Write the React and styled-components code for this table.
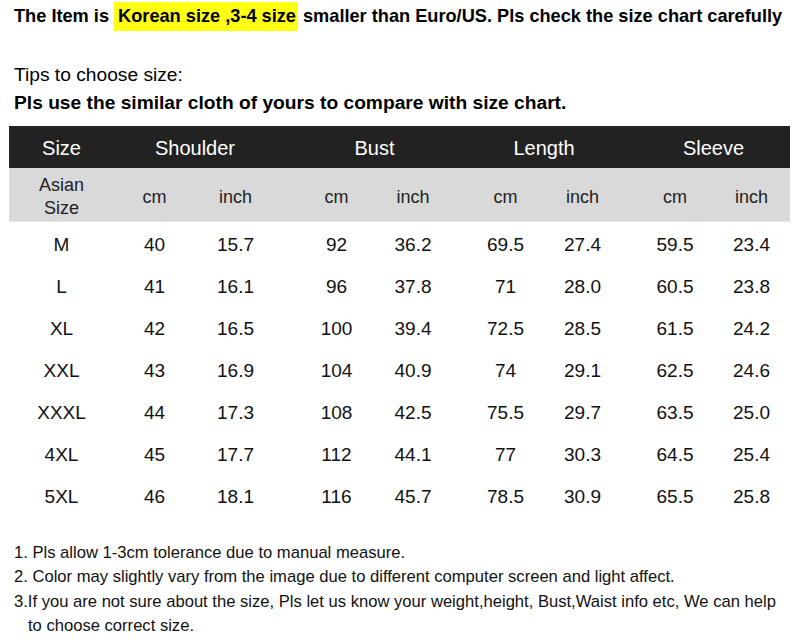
import styled, { createGlobalStyle } from "styled-components";

const GlobalStyle = createGlobalStyle`
  body {
    margin: 0;
    background: #ffffff;
    font-family: "Liberation Sans", Arial, sans-serif;
    color: #000;
  }
`;

const groups = ["Shoulder", "Bust", "Length", "Sleeve"];

// horizontal text offset for each column (px), so the figures sit where the chart has them
const shifts = [3, 3, -5, 6, -4, 4, -4, 4, 0];
const groupShifts = [-2, 2, 0, 4];

const rows = [
  ["M", "40", "15.7", "92", "36.2", "69.5", "27.4", "59.5", "23.4"],
  ["L", "41", "16.1", "96", "37.8", "71", "28.0", "60.5", "23.8"],
  ["XL", "42", "16.5", "100", "39.4", "72.5", "28.5", "61.5", "24.2"],
  ["XXL", "43", "16.9", "104", "40.9", "74", "29.1", "62.5", "24.6"],
  ["XXXL", "44", "17.3", "108", "42.5", "75.5", "29.7", "63.5", "25.0"],
  ["4XL", "45", "17.7", "112", "44.1", "77", "30.3", "64.5", "25.4"],
  ["5XL", "46", "18.1", "116", "45.7", "78.5", "30.9", "65.5", "25.8"],
];

const notes = [
  "1. Pls allow 1-3cm tolerance due to manual measure.",
  "2. Color may slightly vary from the image due to different computer screen and light affect.",
  "3.If you are not sure about the size, Pls let us know your weight,height, Bust,Waist info etc, We can help",
];

const App = () => {
  return (
    <Page>
      <GlobalStyle />
      <Title>
        The Item is <Mark>Korean size ,3-4 size</Mark>smaller than Euro/US. Pls
        check the size chart carefully
      </Title>
      <Tips>Tips to choose size:</Tips>
      <Advice>Pls use the similar cloth of yours to compare with size chart.</Advice>

      <Chart>
        <HeadCell shift={shifts[0]}>Size</HeadCell>
        {groups.map((g, i) => (
          <HeadCell key={g} span={2} shift={groupShifts[i]}>
            {g}
          </HeadCell>
        ))}
        <SubCell shift={shifts[0]}>
          Asian
          <br />
          Size
        </SubCell>
        {groups.map((g, i) => [
          <SubCell key={g + "cm"} shift={shifts[i * 2 + 1]}>
            cm
          </SubCell>,
          <SubCell key={g + "in"} shift={shifts[i * 2 + 2]}>
            inch
          </SubCell>,
        ])}
        {rows.map((r) =>
          r.map((v, i) => (
            <Cell key={r[0] + i} shift={shifts[i]}>
              {v}
            </Cell>
          ))
        )}
      </Chart>

      <Notes>
        {notes.map((n) => (
          <li key={n}>{n}</li>
        ))}
        <li className="indent">to choose correct size.</li>
      </Notes>
    </Page>
  );
};

export default App;

const offset = (p) =>
  p.shift > 0
    ? `padding-left: ${p.shift * 2}px;`
    : p.shift < 0
    ? `padding-right: ${-p.shift * 2}px;`
    : "";

let Page = styled.div`
  width: 800px;
  height: 640px;
  overflow: hidden;
  padding: 0 10px 0 9px;
  box-sizing: border-box;
`;

let Title = styled.div`
  font-weight: 700;
  font-size: 18.2px;
  line-height: 30px;
  padding: 1px 0 0 5px;
  white-space: nowrap;
`;

let Mark = styled.span`
  display: inline-block;
  background: #ffff12;
  padding: 0 2px 0 4px;
  margin-right: 5px;
  line-height: 29px;
`;

let Tips = styled.div`
  font-size: 19.2px;
  margin-top: 30px;
  padding-left: 5px;
  line-height: 28px;
`;

let Advice = styled.div`
  font-size: 19.2px;
  font-weight: 700;
  padding-left: 5px;
  line-height: 28px;
`;

let Chart = styled.div`
  display: grid;
  grid-template-columns: 99px 87px 91px 89px 84px 85px 85px 84px 77px;
  grid-template-rows: 42px 54px;
  grid-auto-rows: 42px;
  margin-top: 9px;
`;

let HeadCell = styled.div`
  grid-column: span ${(p) => p.span || 1};
  background: #222222;
  color: #fff;
  font-size: 20px;
  display: flex;
  align-items: center;
  justify-content: center;
  padding-top: 2px;
  ${offset}
`;

let SubCell = styled.div`
  background: #d9d9d9;
  border-bottom: 1px solid #e6e6e6;
  color: #222;
  font-size: 18px;
  line-height: 23px;
  text-align: center;
  display: flex;
  align-items: center;
  justify-content: center;
  padding-top: 5px;
  ${offset}
`;

let Cell = styled.div`
  font-size: 19px;
  color: #111;
  display: flex;
  align-items: center;
  justify-content: center;
  padding-top: 4px;
  ${offset}
`;

let Notes = styled.ul`
  list-style: none;
  margin: 25px 0 0;
  padding: 0 0 0 5px;
  font-size: 16.6px;
  line-height: 24.3px;
  color: #111;
  li {
    white-space: nowrap;
  }
  .indent {
    padding-left: 14px;
  }
`;
